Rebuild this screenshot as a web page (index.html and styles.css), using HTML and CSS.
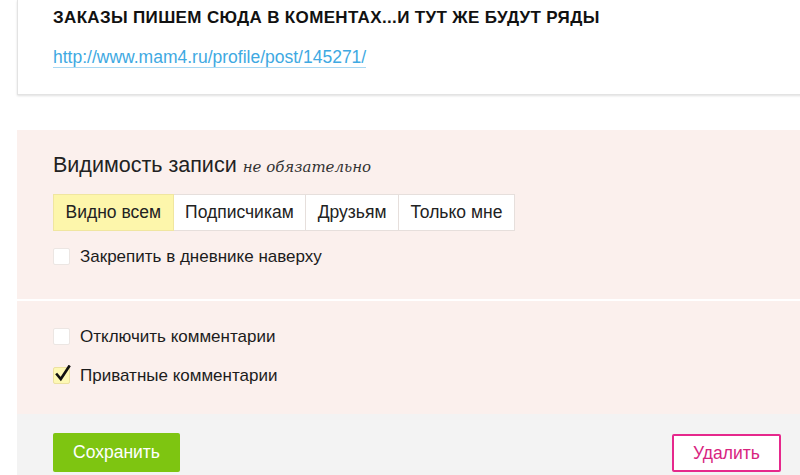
FILE: index.html
```html
<!DOCTYPE html>
<html lang="ru">
<head>
<meta charset="utf-8">
<title>Запись</title>
<link rel="stylesheet" href="styles.css">
</head>
<body>
<div class="page">
  <div class="post-card">
    <div class="post-title">ЗАКАЗЫ ПИШЕМ СЮДА В КОМЕНТАХ...И ТУТ ЖЕ БУДУТ РЯДЫ</div>
    <div class="post-link-row"><a class="post-link" href="#">http://www.mam4.ru/profile/post/145271/</a></div>
  </div>

  <div class="settings">
    <div class="settings-block">
      <div class="settings-title">Видимость записи <span class="optional">не обязательно</span></div>
      <div class="segments">
        <div class="segment active">Видно всем</div>
        <div class="segment">Подписчикам</div>
        <div class="segment">Друзьям</div>
        <div class="segment">Только мне</div>
      </div>
      <label class="check-row"><span class="checkbox"></span><span class="check-label">Закрепить в дневнике наверху</span></label>
    </div>
    <div class="settings-block second">
      <label class="check-row"><span class="checkbox"></span><span class="check-label">Отключить комментарии</span></label>
      <label class="check-row"><span class="checkbox checked"><svg viewBox="0 0 18 18" width="18" height="18"><path d="M3 9.5 L6.8 14 L15 1.5" fill="none" stroke="#111" stroke-width="2.6" stroke-linecap="square" stroke-linejoin="miter"/></svg></span><span class="check-label">Приватные комментарии</span></label>
    </div>
    <div class="actions">
      <button class="btn-save">Сохранить</button>
      <button class="btn-delete">Удалить</button>
    </div>
  </div>
</div>
</body>
</html>
```

FILE: styles.css
```css
html, body {
  margin: 0;
  padding: 0;
  background: #fff;
  overflow: hidden;
}
body {
  font-family: "Liberation Sans", Arial, sans-serif;
  color: #222;
}
.page {
  width: 800px;
  height: 475px;
  padding-left: 17px;
  box-sizing: border-box;
  overflow: hidden;
}
.post-card {
  width: 820px;
  box-sizing: border-box;
  border: 1px solid #e3e3e3;
  border-top: none;
  box-shadow: 0 1px 2px rgba(0,0,0,0.12);
  padding: 8px 0 27px 35px;
  background: #fff;
}
.post-title {
  font-size: 17px;
  letter-spacing: 0.35px;
  font-weight: bold;
  line-height: 20px;
  color: #111;
}
.post-link-row {
  margin-top: 19px;
  line-height: 20px;
  font-size: 17.5px;
}
.post-link {
  color: #3ea9e2;
  text-decoration: none;
  border-bottom: 1px solid #a9d8f2;
}
.settings {
  margin-top: 35px;
}
.settings-block {
  background: #fbf0ed;
  padding: 23px 0 34px 36px;
}
.settings-block.second {
  border-top: 2px solid #fff;
  padding-top: 27px;
  padding-bottom: 30px;
}
.settings-title {
  font-size: 21.5px;
  line-height: 25px;
  color: #222;
}
.optional {
  font-family: "DejaVu Serif", "Liberation Serif", serif;
  font-style: italic;
  font-size: 15px;
  color: #333;
}
.segments {
  display: flex;
  margin-top: 14px;
}
.segment {
  height: 37px;
  box-sizing: border-box;
  border: 1px solid #e6dfdc;
  border-left: none;
  background: #fff;
  font-size: 17.5px;
  line-height: 35px;
  padding: 0 11.5px;
  color: #222;
}
.segment:first-child {
  border-left: 1px solid #e6dfdc;
}
.segment.active {
  background: #fdf6ab;
  border-color: #f0e6a0;
}
.check-row {
  display: flex;
  align-items: center;
  margin-top: 17px;
  height: 17px;
}
.second .check-row {
  margin-top: 0;
}
.second .check-row + .check-row {
  margin-top: 22px;
}
.checkbox {
  width: 17px;
  height: 17px;
  box-sizing: border-box;
  border: 1px solid #ece6e3;
  border-radius: 2px;
  background: #fff;
  position: relative;
  flex: none;
}
.checkbox.checked {
  background: #fdf8b4;
  border-color: #ece1a0;
}
.checkbox svg {
  position: absolute;
  left: 0;
  top: -3px;
}
.check-label {
  margin-left: 10px;
  font-size: 17px;
  line-height: 20px;
  color: #1c1c1c;
}
.actions {
  background: #f3f3f3;
  display: flex;
  justify-content: space-between;
  align-items: flex-start;
  padding: 19px 19px 10px 36px;
}
.btn-save {
  width: 127px;
  height: 39px;
  border: none;
  border-radius: 2px;
  background: #7ec511;
  color: #fff;
  font-family: "Liberation Sans", Arial, sans-serif;
  font-size: 17.5px;
  padding: 0;
}
.btn-delete {
  width: 109px;
  height: 38px;
  margin-top: 1px;
  border: 2px solid #e6288c;
  border-radius: 2px;
  background: #fff;
  color: #d8247f;
  font-family: "Liberation Sans", Arial, sans-serif;
  font-size: 17.5px;
  padding: 0;
}
```
